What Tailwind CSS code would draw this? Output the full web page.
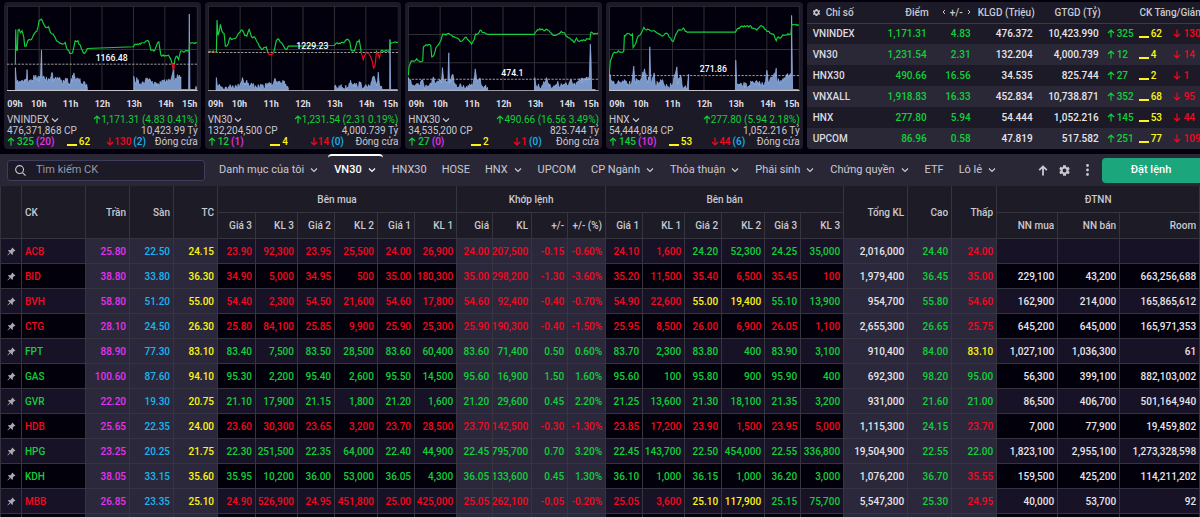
<!DOCTYPE html>
<html lang="vi">
<head>
<meta charset="utf-8">
<meta name="viewport" content="width=device-width, initial-scale=1">
<title>Bảng giá VN30</title>
<script src="https://cdn.jsdelivr.net/npm/@tailwindcss/browser@4"></script>
</head>
<body class="h-screen overflow-hidden bg-[#02000c] font-['Roboto','Liberation_Sans',sans-serif] text-[10px] text-[#c9c9d0]">

<svg class="hidden" aria-hidden="true">
  <symbol id="up" viewBox="0 0 8 9"><path d="M4 8.5V1M1 4l3-3 3 3" fill="none" stroke="currentColor" stroke-width="1.2"/></symbol>
  <symbol id="down" viewBox="0 0 8 9"><path d="M4 .5V8M1 5l3 3 3-3" fill="none" stroke="currentColor" stroke-width="1.2"/></symbol>
  <symbol id="chev" viewBox="0 0 8 8"><path d="M1 2.5l3 3 3-3" fill="none" stroke="currentColor" stroke-width="1.2"/></symbol>
  <symbol id="gear" viewBox="0 0 24 24"><path fill="currentColor" fill-rule="evenodd" d="M19.4 13a7.500 7.500 0 0 0 0-2l2.300-1.700-2.300-4-2.700 1.100a7.500 7.500 0 0 0-1.700-1L14.600 2.500H9.400L9 5.400a7.500 7.500 0 0 0-1.700 1L4.600 5.300l-2.300 4L4.600 11a7.500 7.500 0 0 0 0 2l-2.300 1.700 2.300 4 2.700-1.100a7.500 7.500 0 0 0 1.700 1l.4 2.900h5.200l.4-2.900a7.500 7.500 0 0 0 1.700-1l2.700 1.100 2.300-4zM12 15.600a3.600 3.600 0 1 1 0-7.200 3.600 3.600 0 0 1 0 7.200z"/></symbol>
  <symbol id="pin" viewBox="0 0 16 16"><path fill="currentColor" d="M9.500 1l5.500 5.500-1.300 1-.9-.2-2.500 2.700.2 2.900-1.200 1.100-3.200-3.200L1.500 15l-.6-.6 4-4.700L1.800 6.600 3 5.500l2.900.2L8.600 3.200l-.2-1z"/></symbol>
</svg>

<div class="flex h-full flex-col">
  <section class="grid shrink-0 grid-cols-[repeat(4,minmax(0,1fr))_minmax(0,2fr)] gap-1 pt-[2px] pb-[5px] pl-1">
    <div id="cards" class="contents"></div>
    <div class="overflow-hidden rounded-l-sm bg-[#1c1a26]">
      <table class="w-[434px] table-fixed border-collapse font-medium whitespace-nowrap">
        <colgroup><col class="w-[60px]"><col class="w-[64px]"><col class="w-[44px]"><col class="w-[62px]"><col class="w-[66px]"><col class="w-[34px]"><col class="w-[34px]"><col class="w-[70px]"></colgroup>
        <thead>
          <tr class="h-[21px] border-b border-[#3c3a48]">
            <th class="pl-[5px] font-medium"><span class="flex items-center gap-[5px]"><svg class="size-[9px]"><use href="#gear"/></svg>Chỉ số</span></th>
            <th class="pr-[2px] text-right font-medium">Điểm</th>
            <th class="pr-1 font-medium"><span class="flex items-center justify-end gap-1"><svg class="h-[6px] w-1" viewBox="0 0 4 6"><path d="M3 1L1 3l2 2" fill="none" stroke="currentColor"/></svg>+/-<svg class="h-[6px] w-1" viewBox="0 0 4 6"><path d="M1 1l2 2-2 2" fill="none" stroke="currentColor"/></svg></span></th>
            <th class="pr-[2px] text-right font-medium">KLGD (Triệu)</th>
            <th class="pr-[2px] text-right font-medium">GTGD (Tỷ)</th>
            <th colspan="3" class="text-center font-medium">CK Tăng/Giảm</th>
          </tr>
        </thead>
        <tbody id="indices"></tbody>
      </table>
    </div>
  </section>

  <nav class="flex h-8 shrink-0 items-center overflow-hidden bg-[#292736] pl-[7px] text-[11px] whitespace-nowrap">
    <label class="flex h-[21px] w-[198px] items-center gap-[10px] rounded-[3px] border border-[#3e3e5c] bg-[#1c1a26] pl-[7px]">
      <svg class="size-[11px] shrink-0" viewBox="0 0 12 12" fill="none" stroke="currentColor" stroke-width="1.2"><circle cx="5" cy="5" r="4.300"/><path d="M8.200 8.200L11.500 11.500"/></svg>
      <input type="search" aria-label="Tìm kiếm CK" placeholder="Tìm kiếm CK" class="w-full min-w-0 bg-transparent outline-none placeholder:text-[#9898a6]">
    </label>
    <div class="ml-[14px] flex h-full items-center gap-[15px]">
      <button type="button" class="flex items-center gap-[6px]">Danh mục của tôi<svg class="mr-px size-2"><use href="#chev"/></svg></button>
      <button type="button" class="-mx-[6px] flex h-full items-center gap-[6px] rounded-t-sm border-y-2 border-t-white border-b-transparent px-[6px] font-medium text-white">VN30<svg class="mr-px size-2"><use href="#chev"/></svg></button>
      <button type="button">HNX30</button>
      <button type="button">HOSE</button>
      <button type="button" class="flex items-center gap-[6px]">HNX<svg class="mr-px size-2"><use href="#chev"/></svg></button>
      <button type="button">UPCOM</button>
      <button type="button" class="flex items-center gap-[6px]">CP Ngành<svg class="mr-px size-2"><use href="#chev"/></svg></button>
      <button type="button" class="flex items-center gap-[6px]">Thỏa thuận<svg class="mr-px size-2"><use href="#chev"/></svg></button>
      <button type="button" class="flex items-center gap-[6px]">Phái sinh<svg class="mr-px size-2"><use href="#chev"/></svg></button>
      <button type="button" class="flex items-center gap-[6px]">Chứng quyền<svg class="mr-px size-2"><use href="#chev"/></svg></button>
      <button type="button">ETF</button>
      <button type="button" class="flex items-center gap-[6px]">Lô lẻ<svg class="mr-px size-2"><use href="#chev"/></svg></button>
    </div>
    <div class="ml-auto flex items-center gap-[10px]">
      <button type="button" aria-label="Lên đầu"><svg class="h-[11px] w-[10px]" viewBox="0 0 10 11"><path d="M5 10.500V1.500M1.200 5.200L5 1.400l3.800 3.800" fill="none" stroke="currentColor" stroke-width="1.800"/></svg></button>
      <button type="button" aria-label="Cài đặt"><svg class="size-[13px]"><use href="#gear"/></svg></button>
      <button type="button" aria-label="Thêm" class="px-[5px]"><svg class="h-3 w-[3px]" viewBox="0 0 3 12" fill="currentColor"><circle cx="1.500" cy="1.500" r="1.400"/><circle cx="1.500" cy="6" r="1.400"/><circle cx="1.500" cy="10.500" r="1.400"/></svg></button>
      <button type="button" class="-ml-[2px] h-[25px] w-[98px] rounded-l-sm bg-[#1ba67c] font-medium text-white">Đặt lệnh</button>
    </div>
  </nav>

  <main class="min-h-0 flex-1 overflow-hidden border-l border-[#33323c]">
    <table class="w-full table-fixed border-separate border-spacing-0 font-medium whitespace-nowrap [&_td]:overflow-hidden [&_td]:border-r [&_td]:border-b [&_td]:border-[#35343f] [&_th]:border-r [&_th]:border-b [&_th]:border-[#35343f] [&_th]:font-medium">
      <colgroup>
        <col class="w-[21px]"><col class="w-[64px]"><col class="w-[44px]"><col class="w-[44px]"><col class="w-[44px]">
        <col class="w-[38px]"><col class="w-[42px]"><col class="w-[37px]"><col class="w-[43px]"><col class="w-[37px]"><col class="w-[42px]">
        <col class="w-[36px]"><col class="w-[39px]"><col class="w-[36px]"><col class="w-[38px]">
        <col class="w-[37px]"><col class="w-[42px]"><col class="w-[37px]"><col class="w-[43px]"><col class="w-[36px]"><col class="w-[43px]">
        <col class="w-[64px]"><col class="w-[44px]"><col class="w-[45px]">
        <col class="w-[61px]"><col class="w-[62px]"><col class="w-[80px]">
      </colgroup>
      <thead class="bg-[#1d1b26]">
        <tr class="h-[27px]">
          <th rowspan="2"></th>
          <th rowspan="2" class="pl-[3px] text-left">CK</th>
          <th rowspan="2" class="pr-[3px] text-right">Trần</th>
          <th rowspan="2" class="pr-[3px] text-right">Sàn</th>
          <th rowspan="2" class="pr-[3px] text-right">TC</th>
          <th colspan="6">Bên mua</th>
          <th colspan="4">Khớp lệnh</th>
          <th colspan="6">Bên bán</th>
          <th rowspan="2" class="pr-[3px] text-right">Tổng KL</th>
          <th rowspan="2" class="pr-[3px] text-right">Cao</th>
          <th rowspan="2" class="pr-[3px] text-right">Thấp</th>
          <th colspan="3">ĐTNN</th>
        </tr>
        <tr class="h-[26px] [&_th]:pr-[3px] [&_th]:text-right">
          <th>Giá 3</th><th>KL 3</th><th>Giá 2</th><th>KL 2</th><th>Giá 1</th><th>KL 1</th>
          <th>Giá</th><th>KL</th><th>+/-</th><th>+/- (%)</th>
          <th>Giá 1</th><th>KL 1</th><th>Giá 2</th><th>KL 2</th><th>Giá 3</th><th>KL 3</th>
          <th>NN mua</th><th>NN bán</th><th>Room</th>
        </tr>
      </thead>
      <tbody id="board"></tbody>
    </table>
  </main>
</div>

<script>
const colors = { r: 'text-[#f5081f]', g: 'text-[#12cf3a]', y: 'text-[#fdf612]', w: 'text-[#e6e6ea]', m: 'text-[#e832f0]', c: 'text-[#17b6f0]' };

/* ---- Price board ---- */
/* symbol | ceiling floor reference | bid x6 | match x4 | ask x6 | total high low | foreign x3 | colours of symbol, bids, match, asks (3 levels), high, low */
const rows = [
  'ACB|25.80 22.50 24.15 23.90 92,300 23.95 25,500 24.00 26,900 24.00 207,500 -0.15 -0.60% 24.10 1,600 24.20 52,300 24.25 35,000 2,016,000 24.40 24.00 - - -|rrgggr',
  'BID|38.80 33.80 36.30 34.90 5,000 34.95 500 35.00 180,300 35.00 298,200 -1.30 -3.60% 35.20 11,500 35.40 6,500 35.45 100 1,979,400 36.45 35.00 229,100 43,200 663,256,688|rrrrgr',
  'BVH|58.80 51.20 55.00 54.40 2,300 54.50 21,600 54.60 17,800 54.60 92,400 -0.40 -0.70% 54.90 22,600 55.00 19,400 55.10 13,900 954,700 55.80 54.60 162,900 214,000 165,865,612|rryggr',
  'CTG|28.10 24.50 26.30 25.80 84,100 25.85 9,900 25.90 25,300 25.90 190,300 -0.40 -1.50% 25.95 8,500 26.00 6,900 26.05 1,100 2,655,300 26.65 25.75 645,200 645,000 165,971,353|rrrrgr',
  'FPT|88.90 77.30 83.10 83.40 7,500 83.50 28,500 83.60 60,400 83.60 71,400 0.50 0.60% 83.70 2,300 83.80 400 83.90 3,100 910,400 84.00 83.10 1,027,100 1,036,300 61|gggggy',
  'GAS|100.60 87.60 94.10 95.30 2,200 95.40 2,600 95.50 14,500 95.60 16,900 1.50 1.60% 95.60 100 95.80 900 95.90 400 692,300 98.20 95.00 56,300 399,100 882,103,002|gggggg',
  'GVR|22.20 19.30 20.75 21.10 17,900 21.15 1,800 21.20 1,600 21.20 29,600 0.45 2.20% 21.25 13,600 21.30 18,100 21.35 3,200 931,000 21.60 21.00 86,500 406,700 501,164,940|gggggg',
  'HDB|25.65 22.35 24.00 23.60 30,300 23.65 3,200 23.70 28,500 23.70 142,500 -0.30 -1.30% 23.85 17,200 23.90 1,500 23.95 5,000 1,115,300 24.15 23.70 7,000 77,900 19,459,802|rrrrgr',
  'HPG|23.25 20.25 21.75 22.30 251,500 22.35 64,000 22.40 44,900 22.45 795,700 0.70 3.20% 22.45 143,700 22.50 454,000 22.55 336,800 19,504,900 22.55 22.00 1,823,100 2,955,100 1,273,328,598|gggggg',
  'KDH|38.05 33.15 35.60 35.95 10,200 36.00 53,000 36.05 4,300 36.05 133,600 0.45 1.30% 36.10 1,000 36.15 1,000 36.20 3,000 1,076,200 36.70 35.55 159,500 425,200 114,211,202|gggggr',
  'MBB|26.85 23.35 25.10 24.90 526,900 24.95 451,800 25.00 425,000 25.05 262,100 -0.05 -0.20% 25.05 3,600 25.10 117,900 25.15 75,700 5,547,300 25.30 24.95 40,000 53,700 92|rryggr',
  '||gggggg'
];
document.getElementById('board').innerHTML = rows.map((line, i) => {
  const [sym, data, k] = line.split('|');
  const v = data ? data.split(' ') : Array(25).fill('-');
  const tone = ['m', 'c', 'y', ...k[0].repeat(10), k[1], k[1], k[2], k[2], k[3], k[3], 'w', k[4], k[5], 'w', 'w', 'w'];
  const cells = v.map((t, n) => {
    const hi = n < 3 || (n > 8 && n < 13) || (n > 18 && n < 22);
    return `<td class="pr-[3px] text-right ${colors[tone[n]]} ${hi ? 'bg-[#2b283c]' : ''}"><span class="flex justify-end">${t === '-' ? '' : t}</span></td>`;
  }).join('');
  return `<tr class="h-[25px] ${i % 2 ? 'bg-[#02000a]' : 'bg-[#181226]'}"><td><svg class="mx-auto size-[9px] text-[#a9a9b0]"><use href="#pin"/></svg></td><td class="pl-[3px] ${colors[k[0]]}">${sym}</td>${cells}</tr>`;
}).join('');

/* ---- Index summary ---- */
const arrow = (id) => `<svg class="h-[9px] w-2 shrink-0"><use href="#${id}"/></svg>`;
const dash = '<i class="mt-[7px] h-[2px] w-[10px] shrink-0 bg-[#fdf612]"></i>';
const idx = [
  ['VNINDEX', '1,171.31', '4.83', '476.372', '10,423.990', 325, 62, 130],
  ['VN30', '1,231.54', '2.31', '132.204', '4,000.739', 12, 4, 14],
  ['HNX30', '490.66', '16.56', '34.535', '825.744', 27, 2, 1],
  ['VNXALL', '1,918.83', '16.33', '452.834', '10,738.871', 352, 68, 95],
  ['HNX', '277.80', '5.94', '54.444', '1,052.216', 145, 53, 44],
  ['UPCOM', '86.96', '0.58', '47.819', '517.582', 251, 77, 109]
];
document.getElementById('indices').innerHTML = idx.map((r, i) => `
  <tr class="h-[21px] ${i % 2 ? 'bg-[#2a2737]' : ''}">
    <td class="pl-[6px] text-[#dcdce0]">${r[0]}</td>
    <td class="pr-1 text-right ${colors.g}">${r[1]}</td><td class="pr-1 text-right ${colors.g}">${r[2]}</td>
    <td class="pr-1 text-right ${colors.w}">${r[3]}</td><td class="pr-1 text-right ${colors.w}">${r[4]}</td>
    <td class="pl-1 ${colors.g}"><span class="flex items-center gap-[2px]">${arrow('up')}${r[5]}</span></td>
    <td class="pl-[2px] ${colors.y}"><span class="flex items-center gap-[2px]">${dash}${r[6]}</span></td>
    <td class="pl-[2px] ${colors.r}"><span class="flex items-center gap-[3px]">${arrow('down')}${r[7]}</span></td>
  </tr>`).join('');

/* ---- Intraday charts: point lists in a 570 x 255 space, y grows downwards ---- */
const charts = [
  { name: 'VNINDEX', chg: '1,171.31 (4.83 0.41%)', vol: '476,371,868 CP', val: '10,423.99 Tỷ', up: 325, ceil: 20, flat: 62, down: 130, floor: 2,
    ref: 174, label: '1166.48', lx: 313, ly: 165, grid: [130],
    price: '25,174 26,70 28,132 31,132 33,72 36,70 40,80 45,74 50,92 53,120 57,120 62,104 70,101 76,94 82,82 89,76 96,44 102,39 108,50 116,64 124,62 130,80 138,84 144,94 150,106 158,112 166,114 174,109 180,130 188,142 196,140 204,104 212,104 222,127 231,142 238,132 240,127 378,122 382,115 396,112 408,110 418,104 424,107 430,132 442,132 450,110 454,107 460,147 470,150 483,147 492,166 498,192 502,160 508,150 513,160 519,135 545,135 546,111 568,111',
    bars: '25,184 28,222 38,225 46,222 58,222 60,190 62,230 70,222 76,222 82,210 90,220 100,214 103,132 105,210 114,220 124,217 136,200 138,227 148,220 158,214 164,232 174,220 182,227 190,232 200,200 206,222 214,220 224,232 234,234 240,244 240,252|379,252 379,210 382,227 392,220 398,232 408,230 418,217 428,220 438,234 448,230 462,230 470,220 480,227 490,220 496,197 498,172 500,222 508,214 520,212 520,250 543,250 545,24 547,250 563,250 565,240 567,250' },
  { name: 'VN30', chg: '1,231.54 (2.31 0.19%)', vol: '132,204,500 CP', val: '4,000.739 Tỷ', up: 12, ceil: 1, flat: 4, down: 14, floor: 0,
    ref: 139, label: '1229.23', lx: 312, ly: 129, grid: [130],
    price: '0,137 25,137 27,42 30,88 37,55 42,76 48,82 52,120 58,118 64,98 76,98 86,92 96,78 102,72 110,88 116,90 123,70 130,92 138,92 146,106 154,122 160,130 174,122 182,144 190,146 196,140 204,104 210,98 216,108 226,120 234,130 240,120 378,118 386,110 396,112 408,108 418,100 424,108 428,132 438,134 446,106 452,102 458,140 464,160 470,144 476,140 484,148 490,162 495,185 499,180 504,136 512,155 517,134 543,132 545,109 568,109',
    bars: '24,252 25,214 28,240 34,234 42,242 54,243 64,244 74,238 86,244 96,234 103,214 108,234 116,222 122,240 132,234 144,242 156,241 166,244 178,232 190,240 198,222 206,226 214,224 226,230 234,240 240,246 240,252|379,252 379,240 386,244 396,242 406,246 418,243 426,222 434,234 446,240 454,232 464,244 474,243 486,240 490,224 498,214 504,238 509,198 513,238 519,240 520,250 543,250 544,100 546,250 566,250' },
  { name: 'HNX30', chg: '490.66 (16.56 3.49%)', vol: '34,535,200 CP', val: '825.744 Tỷ', up: 27, ceil: 0, flat: 2, down: 1, floor: 0,
    ref: 219, label: '474.1', lx: 312, ly: 209, grid: [85, 170],
    price: '1,207 3,182 10,164 18,165 26,158 34,165 44,164 46,122 54,116 68,118 71,152 78,146 84,124 92,114 98,104 104,84 114,87 124,84 134,92 144,95 156,106 166,100 174,93 182,104 190,114 198,100 202,84 212,80 218,72 226,80 238,85 378,85 384,76 394,68 404,72 416,70 426,80 438,88 446,86 458,76 468,80 476,92 486,98 498,108 504,96 510,106 518,102 544,100 546,81 568,81',
    bars: '1,214 6,222 14,240 24,234 34,236 44,220 48,240 60,238 70,236 76,212 82,230 92,226 100,230 103,184 107,224 119,228 122,140 124,232 134,204 138,234 148,244 156,232 164,244 176,240 188,242 196,222 201,188 206,228 214,216 222,240 230,244 238,244 238,252|378,252 379,214 382,236 392,242 402,236 416,220 426,240 438,244 446,232 456,240 466,236 478,238 486,220 496,232 504,228 516,224 530,220 542,214 545,114 547,150 549,250 560,250' },
  { name: 'HNX', chg: '277.80 (5.94 2.18%)', vol: '54,444,084 CP', val: '1,052.216 Tỷ', up: 145, ceil: 10, flat: 53, down: 44, floor: 6,
    ref: 208, label: '271.86', lx: 312, ly: 198, grid: [130],
    price: '1,204 4,164 12,142 20,140 28,134 36,138 44,136 46,88 52,84 64,86 70,84 72,124 80,112 86,92 96,82 104,64 112,72 122,73 132,74 142,80 152,84 160,90 168,82 176,84 184,96 192,106 200,84 206,74 214,72 222,66 228,76 238,78 378,78 384,68 396,60 408,62 424,60 434,68 442,72 452,60 462,62 472,76 484,82 494,88 500,104 506,92 512,96 520,86 544,84 546,58 568,58',
    bars: '1,200 6,224 16,232 26,228 36,230 46,220 56,232 68,228 74,180 78,224 88,222 98,214 106,188 112,222 120,220 122,122 125,228 135,200 138,234 148,232 158,224 168,244 178,242 190,236 198,204 203,182 206,232 214,206 218,234 226,244 234,244 238,204 238,252|378,252 379,162 382,234 392,240 402,236 416,240 426,230 436,234 446,228 456,236 466,230 472,192 476,232 488,212 500,186 502,228 514,222 526,216 538,208 545,202 546,28 549,250 566,250' }
];
let seed = 7;
const rnd = () => (seed = (seed * 16807) % 2147483647) / 2147483647;
/* Adds ticks between the listed points; long straight stretches (lunch break) stay flat. */
function ticks(list, step, amp) {
  const p = list.split(' ').map(s => s.split(',').map(Number));
  const out = [p[0]];
  for (let i = 1; i < p.length; i++) {
    const [x0, y0] = p[i - 1], [x1, y1] = p[i];
    const n = Math.floor((x1 - x0) / step);
    if (n > 1 && n * step < 60 && y0 < 248) for (let j = 1; j < n; j++) {
      out.push([Math.round(x0 + (x1 - x0) * j / n), Math.min(250, Math.round(y0 + (y1 - y0) * j / n + (rnd() * 2 - 1) * amp))]);
    }
    out.push([x1, y1]);
  }
  return out.map(q => q.join(',')).join(' ');
}
document.getElementById('cards').innerHTML = charts.map((c, i) => {
  const line = ticks(c.price, 3, 3);
  const areas = c.bars.split('|').map(b => {
    const pts = ticks(b, 2, 9);
    const first = pts.split(',')[0], last = pts.split(' ').pop().split(',')[0];
    return `<polygon points="${first},252 ${pts} ${last},252" fill="#7a97c8" stroke="#9dbcf0" stroke-width="2"/>`;
  }).join('');
  return `
  <article class="rounded-sm bg-[#1c1a26] px-[3px] pt-1">
    <svg class="block h-auto w-full bg-[#02000c]" viewBox="0 0 570 255" role="img" aria-label="${c.name}">
      <clipPath id="a${i}"><rect width="570" height="${c.ref}"/></clipPath>
      <clipPath id="b${i}"><rect y="${c.ref}" width="570" height="90"/></clipPath>
      <path d="M1 1H569V253H1zM96 0V253M190 0V253M284 0V253M378 0V253M472 0V253${c.grid.map(y => `M0 ${y}H570`).join('')}" fill="none" stroke="#303034" stroke-width="3"/>
      ${areas}
      <path d="M0 ${c.ref}H570" stroke="#b9b9b4" stroke-width="2.500" stroke-dasharray="7 4"/>
      <polyline points="${line}" fill="none" stroke="#12cf3a" stroke-width="3.500" clip-path="url(#a${i})"/>
      <polyline points="${line}" fill="#a00c1c" stroke="#f5081f" stroke-width="3.500" clip-path="url(#b${i})" class="${i ? 'fill-none' : ''}"/>
      <path d="M0 253H570" stroke="#c4c4c8" stroke-width="3"/>
      <text x="${c.lx}" y="${c.ly}" text-anchor="middle" fill="#fff" class="text-[26px] font-medium">${c.label}</text>
    </svg>
    <div class="mt-[3px] grid grid-cols-[1fr_2fr_2fr_2fr_2fr_2fr_1fr] text-center text-[9px] leading-5 font-bold text-[#dcdce0]"><span>09h</span><span>10h</span><span>11h</span><span>12h</span><span>13h</span><span>14h</span><span>15h</span></div>
    <div class="leading-[11px] whitespace-nowrap">
      <div class="flex justify-between"><button type="button" class="flex items-center gap-[2px]">${c.name}<svg class="size-2"><use href="#chev"/></svg></button><span class="flex items-center ${colors.g}">${arrow('up')}${c.chg}</span></div>
      <div class="flex justify-between"><span>${c.vol}</span><span>${c.val}</span></div>
      <div class="grid grid-cols-4">
        <span class="flex items-center gap-[2px] font-medium ${colors.g}">${arrow('up')}<span>${c.up}<span class="pl-[2px] ${colors.m}">(${c.ceil})</span></span></span>
        <span class="flex items-center justify-center gap-[2px] font-medium ${colors.y}">${dash}${c.flat}</span>
        <span class="flex items-center justify-center font-medium ${colors.r}">${arrow('down')}<span>${c.down}<span class="pl-[2px] ${colors.c}">(${c.floor})</span></span></span>
        <span class="text-right">Đóng cửa</span>
      </div>
    </div>
  </article>`;
}).join('');
</script>
</body>
</html>
